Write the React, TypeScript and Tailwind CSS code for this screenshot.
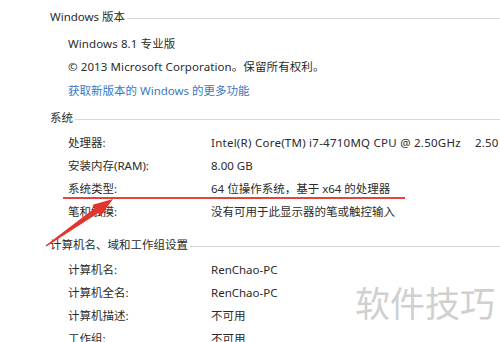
import React from 'react';

const font = { fontFamily: '"Noto Sans", "Noto Sans CJK SC", sans-serif' };

function SectionHeader({ title, className = '' }: { title: string; className?: string }) {
  return (
    <div className={`flex h-[22px] items-center pl-[50px] ${className}`}>
      <span className="whitespace-nowrap text-[#2b2b2b]">{title}</span>
      <div className="ml-[2px] mt-[3px] h-px flex-1 bg-[#d6d6d6]" />
    </div>
  );
}

function InfoRow({ label, value }: { label: string; value: React.ReactNode }) {
  return (
    <div className="flex h-[23px] items-center pl-[68px]">
      <div className="w-[143px] shrink-0 whitespace-nowrap text-[#2b2b2b]">{label}</div>
      <div className="whitespace-nowrap text-[#2b2b2b]">{value}</div>
    </div>
  );
}

export default function App() {
  return (
    <div className="relative h-[342px] w-[500px] overflow-hidden bg-white text-[11.5px]" style={font}>
      <div className="pt-[6px]">
        {/* Windows 版本 */}
        <SectionHeader title="Windows 版本" />
        <div className="mt-[3.5px]">
          <div className="flex h-[23.5px] items-center pl-[68px] whitespace-nowrap text-[#2b2b2b] tracking-[0.1px]">
            Windows 8.1 专业版
          </div>
          <div className="flex h-[23.5px] items-center pl-[68px] whitespace-nowrap text-[#2b2b2b] tracking-[0.1px]">
            © 2013 Microsoft Corporation。保留所有权利。
          </div>
          <div className="flex h-[23.5px] items-center pl-[68px] whitespace-nowrap text-[#3a77c2]">
            获取新版本的 Windows 的更多功能
          </div>
        </div>

        {/* 系统 */}
        <SectionHeader title="系统" className="mt-[5px]" />
        <div className="mt-[2.5px]">
          <InfoRow
            label="处理器:"
            value={
              <span className="tracking-[0.25px]">
                Intel(R) Core(TM) i7-4710MQ CPU @ 2.50GHz<span className="ml-[14px]">2.50</span>
              </span>
            }
          />
          <InfoRow label="安装内存(RAM):" value="8.00 GB" />
          <InfoRow label="系统类型:" value="64 位操作系统，基于 x64 的处理器" />
          <InfoRow label="笔和触摸:" value="没有可用于此显示器的笔或触控输入" />
        </div>

        {/* 计算机名、域和工作组设置 */}
        <SectionHeader title="计算机名、域和工作组设置" className="mt-[10.5px]" />
        <div className="mt-[2.5px]">
          <InfoRow label="计算机名:" value="RenChao-PC" />
          <InfoRow label="计算机全名:" value="RenChao-PC" />
          <InfoRow label="计算机描述:" value="不可用" />
          <InfoRow label="工作组:" value="不可用" />
        </div>
      </div>

      {/* 红色下划线 */}
      <div className="absolute left-[63px] top-[197px] h-[2px] w-[342px] bg-[#e2453d]" />

      {/* 红色箭头 */}
      <svg className="pointer-events-none absolute left-0 top-0" width="500" height="342" viewBox="0 0 500 342">
        <polygon
          points="113,199 100.6,216.2 98.3,213 46.4,246.6 45.6,245.4 94.9,208 92.6,204.8"
          fill="#e0362f"
        />
      </svg>

      {/* 水印 */}
      <div className="absolute left-[355px] top-[281px] whitespace-nowrap text-[35px] leading-[46px] text-[#d0d0d0]">
        软件技巧
      </div>
    </div>
  );
}
